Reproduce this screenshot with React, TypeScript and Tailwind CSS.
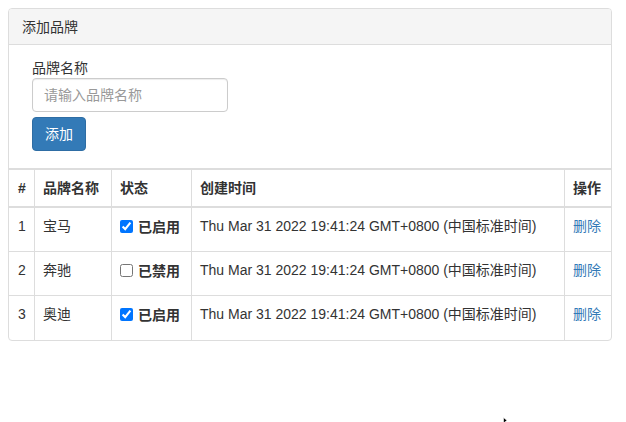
import React from "react";

const rows = [
  { id: 1, name: "宝马", on: true },
  { id: 2, name: "奔驰", on: false },
  { id: 3, name: "奥迪", on: true },
];

const time = "Thu Mar 31 2022 19:41:24 GMT+0800 (中国标准时间)";

export default function App() {
  return (
    <div
      className="relative w-[626px] h-[422px] bg-white text-[14px] leading-[20px] text-[#333]"
      style={{ fontFamily: '"Liberation Sans", "Noto Sans CJK SC", sans-serif' }}
    >
      <div className="absolute left-[503px] top-[417px]">
        <svg width="8" height="6" viewBox="0 0 8 6">
          <path d="M0.5 0.5 L0.5 6 L4 3.5 Z" fill="#000" stroke="#fff" strokeWidth="0.6" />
        </svg>
      </div>
      <div className="pt-2 pl-2">
        <div className="w-[604px] border border-[#ddd] rounded-[4px]">
          <div className="h-[36px] bg-[#f5f5f5] border-b border-[#ddd] rounded-t-[3px] flex items-center pl-[13px]">
            添加品牌
          </div>
          <div className="pt-[13px] pb-[17px] pl-[23px] flex flex-col items-start">
            <div className="h-[20px]">品牌名称</div>
            <input
              type="text"
              placeholder="请输入品牌名称"
              className="w-[196px] h-[34px] border border-[#ccc] rounded-[4px] px-[11px] text-[14px] placeholder:text-[#999] outline-none shadow-[inset_0_1px_1px_rgba(0,0,0,0.075)]"
            />
            <button className="mt-[5px] w-[54px] h-[34px] bg-[#337ab7] border border-[#2e6da4] rounded-[4px] text-white text-[14px] flex items-center justify-center">
              添加
            </button>
          </div>
          <div className="border-t-2 border-[#ddd]">
            <div className="flex h-[38px] border-b-2 border-[#ddd] font-bold">
              <div className="w-[26px] border-r border-[#ddd] pl-[9px] pt-2">#</div>
              <div className="w-[77px] border-r border-[#ddd] pl-2 pt-2">品牌名称</div>
              <div className="w-[80px] border-r border-[#ddd] pl-2 pt-2">状态</div>
              <div className="w-[373px] border-r border-[#ddd] pl-2 pt-2">创建时间</div>
              <div className="w-[46px] pl-2 pt-2">操作</div>
            </div>
            {rows.map((r, i) => (
              <div
                key={r.id}
                className={`flex h-[44px] ${i < rows.length - 1 ? "border-b border-[#ddd]" : ""}`}
              >
                <div className="w-[26px] border-r border-[#ddd] pl-[9px] pt-2">{r.id}</div>
                <div className="w-[77px] border-r border-[#ddd] pl-2 pt-2">{r.name}</div>
                <div className="w-[80px] border-r border-[#ddd] pl-2 pt-2">
                  <label className="flex items-center h-[20px] font-bold gap-[5px]">
                    <input
                      type="checkbox"
                      defaultChecked={r.on}
                      className="m-0 w-[13px] h-[13px]"
                    />
                    <span className="relative top-[1px]">{r.on ? "已启用" : "已禁用"}</span>
                  </label>
                </div>
                <div className="w-[373px] border-r border-[#ddd] pl-2 pt-2 whitespace-nowrap">{time}</div>
                <div className="w-[46px] pl-2 pt-2">
                  <a className="text-[#337ab7] cursor-pointer">删除</a>
                </div>
              </div>
            ))}
          </div>
        </div>
      </div>
    </div>
  );
}
